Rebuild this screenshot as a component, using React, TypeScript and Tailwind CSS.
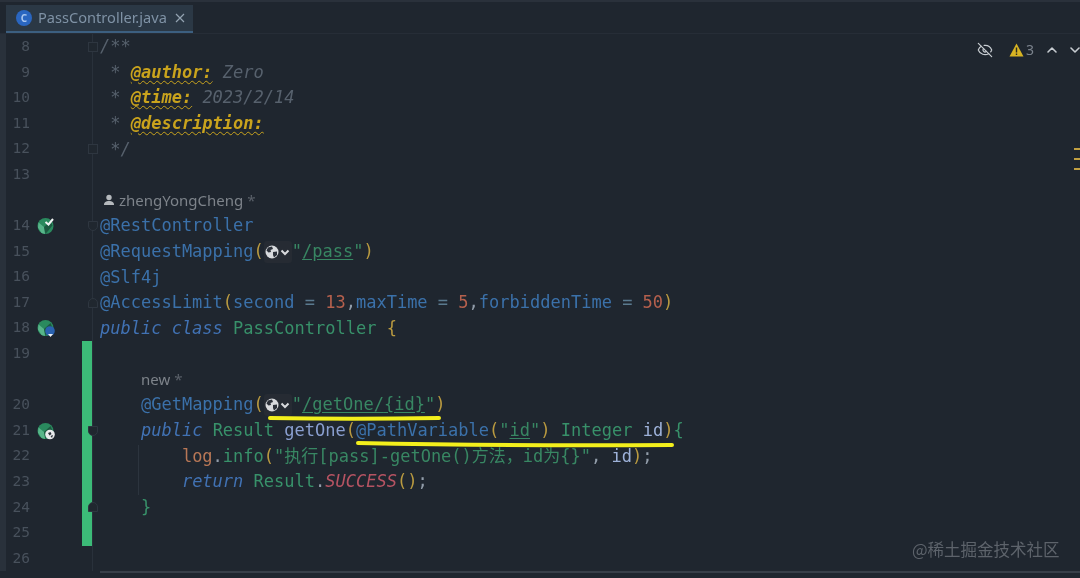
import React from "react";
import { ChevronUp, ChevronDown, EyeOff } from "lucide-react";

const C = {
  ann: "text-[#3b71aa]",
  kw: "text-[#4172b4] italic",
  cls: "text-[#38916a]",
  yel: "text-[#b99a40]",
  num: "text-[#b5604d]",
  op: "text-[#5a7a8f]",
  str: "text-[#388763]",
  fn: "text-[#8a9fd0]",
  id: "text-[#9db1d8]",
  cm: "text-[#57616d] italic",
  tag: "text-[#c9a31d] font-bold italic underline decoration-wavy decoration-1 underline-offset-2",
  log: "text-[#b87756]",
  con: "text-[#b55362] italic",
  pun: "text-[#929daa]",
};

function S({ c, children, u }: { c: string; children: React.ReactNode; u?: boolean }) {
  return <span className={c + (u ? " underline underline-offset-2" : "")}>{children}</span>;
}

function Globe() {
  return (
    <span className="inline-flex items-center justify-center w-[28px] h-[22px] align-middle bg-[#262b33] rounded-[3px]">
      <svg width="14" height="14" viewBox="0 0 14 14">
        <circle cx="7" cy="7" r="6.5" fill="#d8dadd" />
        <path d="M3 2.5 7 1.5 8 4 5.5 5 6 7 3.5 7.5 1.5 5.5Z M8 7 12 6.5 12 10 9 12.5 8 10Z" fill="#2b3039" />
      </svg>
      <svg width="12" height="12" viewBox="0 0 12 12" fill="none" stroke="#d8dadd" strokeWidth="2">
        <path d="M2.5 4.5 6 8l3.5-3.5" />
      </svg>
    </span>
  );
}

function Bean({ badge }: { badge: "check" | "blue" | "globe" }) {
  return (
    <svg width="20" height="20" viewBox="0 0 20 20">
      <circle cx="8.5" cy="10" r="8" fill="#2a8a5e" />
      <path d="M1.5 6.5 7 11l1 7-3.5-1-3.5-5.5Z" fill="#58b58a" />
      <path d="M7 11l6.5-6 2 4.5-7 8.5Z" fill="#1c5a41" />
      {badge === "check" && <path d="M8.5 6l3 2.5L16 3" fill="none" stroke="#f1f3f4" strokeWidth="2" />}
      {badge === "blue" && (
        <>
          <circle cx="13" cy="13" r="4.8" fill="#2a62b0" />
          <path d="M11 16h5l-2.5 3Z" fill="#eef1f5" />
        </>
      )}
      {badge === "globe" && (
        <>
          <circle cx="13" cy="13.5" r="4.8" fill="#e8eaec" />
          <path d="M11 12 13.5 11 14.5 13 12.5 14.5Z M13.5 15l2.5-1-1 3Z" fill="#2b3039" />
        </>
      )}
    </svg>
  );
}

function Fold({ kind }: { kind: "box" | "cap" | "end" }) {
  return (
    <span
      className={
        "absolute left-[-5px] top-1/2 -translate-y-1/2 w-[10px] h-[10px] bg-[#20272f] border border-[#2e3640] " +
        (kind === "cap" ? "rounded-b-[5px] " : kind === "end" ? "rounded-t-[5px] " : "")
      }
    />
  );
}

type Row = {
  n?: number;
  icon?: "check" | "blue" | "globe";
  bar?: boolean;
  fold?: "box" | "cap" | "end";
  code?: React.ReactNode;
};

const rows: Row[] = [
  { n: 8, fold: "box", code: <S c={C.cm}>/**</S> },
  { n: 9, code: <><S c={C.cm}> * </S><S c={C.tag}>@author:</S><S c={C.cm}> Zero</S></> },
  { n: 10, code: <><S c={C.cm}> * </S><S c={C.tag}>@time:</S><S c={C.cm}> 2023/2/14</S></> },
  { n: 11, code: <><S c={C.cm}> * </S><S c={C.tag}>@description:</S></> },
  { n: 12, fold: "box", code: <S c={C.cm}> */</S> },
  { n: 13 },
  {
    code: (
      <span className="flex items-center font-['Noto_Sans',sans-serif] text-[15px] text-[#7d838a] pl-[3px]">
        <svg width="12" height="12" viewBox="0 0 12 12" className="mr-[4px]">
          <circle cx="6" cy="3.5" r="2.7" fill="#b5b9bd" />
          <path d="M1 11c0-3 2-4 5-4s5 1 5 4Z" fill="#b5b9bd" />
        </svg>
        zhengYongCheng&nbsp;<span className="text-[#5a6069]">*</span>
      </span>
    ),
  },
  { n: 14, icon: "check", fold: "cap", code: <S c={C.ann}>@RestController</S> },
  {
    n: 15,
    code: (
      <><S c={C.ann}>@RequestMapping</S><S c={C.yel}>(</S><Globe /><S c={C.str}>"</S><S c={C.str} u>/pass</S><S c={C.str}>"</S><S c={C.yel}>)</S></>
    ),
  },
  { n: 16, code: <S c={C.ann}>@Slf4j</S> },
  {
    n: 17,
    fold: "end",
    code: (
      <><S c={C.ann}>@AccessLimit</S><S c={C.yel}>(</S><S c={C.ann}>second</S><S c={C.op}> = </S><S c={C.num}>13</S><S c={C.pun}>,</S><S c={C.ann}>maxTime</S><S c={C.op}> = </S><S c={C.num}>5</S><S c={C.pun}>,</S><S c={C.ann}>forbiddenTime</S><S c={C.op}> = </S><S c={C.num}>50</S><S c={C.yel}>)</S></>
    ),
  },
  { n: 18, icon: "blue", code: <><S c={C.kw}>public class</S> <S c={C.cls}>PassController</S> <S c={C.yel}>{"{"}</S></> },
  { n: 19, bar: true },
  {
    bar: true,
    code: (
      <span className="flex items-center font-['Noto_Sans',sans-serif] text-[15px] text-[#7d838a] pl-[41px]">
        new&nbsp;<span className="text-[#5a6069]">*</span>
      </span>
    ),
  },
  {
    n: 20,
    bar: true,
    code: (
      <>{"    "}<S c={C.ann}>@GetMapping</S><S c={C.yel}>(</S><Globe /><S c={C.str}>"</S><S c={C.str} u>/getOne/{"{id}"}</S><S c={C.str}>"</S><S c={C.yel}>)</S></>
    ),
  },
  {
    n: 21,
    icon: "globe",
    bar: true,
    fold: "cap",
    code: (
      <>{"    "}<S c={C.kw}>public</S> <S c={C.cls}>Result</S> <S c={C.fn}>getOne</S><S c={C.yel}>(</S><S c={C.ann}>@PathVariable</S><S c={C.yel}>(</S><S c={C.str}>"</S><S c={C.str} u>id</S><S c={C.str}>"</S><S c={C.yel}>)</S> <S c={C.cls}>Integer</S> <S c={C.id}>id</S><S c={C.yel}>)</S><S c={C.cls}>{"{"}</S></>
    ),
  },
  {
    n: 22,
    bar: true,
    code: (
      <>{"        "}<S c={C.log}>log</S><S c={C.pun}>.</S><S c={C.cls}>info</S><S c={C.yel}>(</S><S c={C.str}>"执行[pass]-getOne()方法，id为{"{}"}"</S><S c={C.pun}>, </S><S c={C.id}>id</S><S c={C.yel}>)</S><S c={C.pun}>;</S></>
    ),
  },
  {
    n: 23,
    bar: true,
    code: (
      <>{"        "}<S c={C.kw}>return</S> <S c={C.cls}>Result</S><S c={C.pun}>.</S><S c={C.con}>SUCCESS</S><S c={C.yel}>()</S><S c={C.pun}>;</S></>
    ),
  },
  { n: 24, bar: true, fold: "end", code: <>{"    "}<S c={C.cls}>{"}"}</S></> },
  { n: 25, bar: true },
  { n: 26 },
];

export default function App() {
  return (
    <div className="relative w-[1080px] h-[578px] overflow-hidden bg-[#1f262f] font-['DejaVu_Sans_Mono',monospace] blur-[0.5px]">
      {/* Tab bar */}
      <div className="h-[34px] pt-[3px] pl-[6px] flex border-b border-[#262d37] border-t-[2px] border-t-[#2a313b]">
        <div className="w-[187px] flex items-center bg-[#2b3845] border-b-[2px] border-[#3c5f80] pl-[10px] font-['Noto_Sans',sans-serif]">
          <span className="w-[16px] h-[16px] rounded-full bg-[#2a66c0] flex items-center justify-center text-[10px] font-bold text-[#a9c6ee] shrink-0">
            C
          </span>
          <span className="ml-[6px] text-[14.6px] text-[#7f92a5] whitespace-nowrap">PassController.java</span>
          <svg width="10" height="10" viewBox="0 0 10 10" className="ml-[8px]" stroke="#93a2b1" strokeWidth="1.2">
            <path d="M1 1l8 8M9 1l-8 8" />
          </svg>
        </div>
      </div>

      {/* Editor */}
      <div className="flex">
        <div className="w-[6px] shrink-0 bg-[#29313b]" />
        <div className="flex-1 flex flex-col">
          {rows.map((r, i) => (
            <div key={i} className="flex h-[25.6px] items-stretch">
              <div className="w-[24px] shrink-0 flex items-center justify-end text-[14.5px] text-[#48515c]">
                {r.n}
              </div>
              <div className="w-[52px] shrink-0 flex items-center pl-[7px]">
                {r.icon && <Bean badge={r.icon} />}
              </div>
              <div className={"w-[10px] shrink-0 " + (r.bar ? "bg-[#3cbb78]" : "")} />
              <div className="w-[8px] shrink-0 relative border-l border-[#29313b]">
                {r.fold && <Fold kind={r.fold} />}
              </div>
              <div className="flex-1 flex items-center text-[17px] leading-none font-['DejaVu_Sans_Mono','Noto_Sans_CJK_SC',monospace]">
                <div className="whitespace-pre">{r.code}</div>
              </div>
            </div>
          ))}
        </div>
      </div>

      {/* Indent guide */}
      <div className="absolute left-[138px] top-[445px] w-px h-[50px] bg-[#2c343e]" />

      {/* Bottom rule */}
      <div className="absolute left-[100px] right-0 top-[571px] h-[2px] bg-[#383f49]" />

      {/* Inspection toolbar */}
      <div className="absolute left-[977px] top-[41px] flex items-center h-[17px] text-[#c7ccd1]">
        <EyeOff size={16} strokeWidth={1.8} />
        <svg width="15" height="14" viewBox="0 0 15 14" className="ml-[16px]">
          <path d="M7.5 0.5 14.5 13.5H0.5Z" fill="#d8b423" />
          <path d="M6.8 4.5h1.4v5H6.8Zm0 6h1.4v1.5H6.8Z" fill="#2a2a20" />
        </svg>
        <span className="ml-[2px] text-[14px] text-[#7b838d] font-['Noto_Sans',sans-serif]">3</span>
        <ChevronUp size={16} strokeWidth={2.4} className="ml-[10px]" />
        <ChevronDown size={16} strokeWidth={2.4} className="ml-[7px]" />
      </div>

      {/* Scrollbar marks */}
      <div className="absolute right-0 top-[148px] w-[6px] flex flex-col gap-[8px]">
        <div className="h-[2px] bg-[#c2a042]" />
        <div className="h-[2px] bg-[#c2a042]" />
        <div className="h-[2px] bg-[#c2a042]" />
      </div>

      {/* Hand-drawn highlights */}
      <svg className="absolute inset-0 pointer-events-none" width="1080" height="578" fill="none">
        <path d="M270 418 Q350 419.5 439 418" stroke="#f3ef1c" strokeWidth="4" strokeLinecap="round" />
        <path d="M358 443 Q500 446 672 445" stroke="#f3ef1c" strokeWidth="4" strokeLinecap="round" />
      </svg>

      {/* Watermark */}
      <div className="absolute left-[912px] top-[537px] text-[16.5px] leading-[24px] text-[#5d636b] font-['Noto_Sans_CJK_SC',sans-serif] whitespace-nowrap">
        @稀土掘金技术社区
      </div>
    </div>
  );
}
